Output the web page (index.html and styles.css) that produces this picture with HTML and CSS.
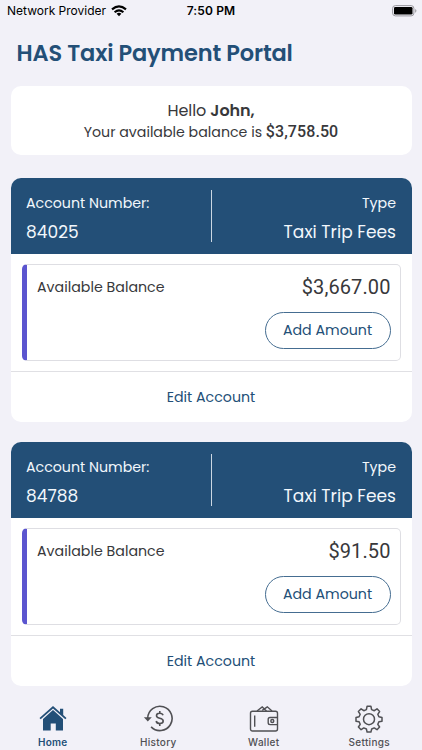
FILE: index.html
```html
<!DOCTYPE html>
<html lang="en">
<head>
<meta charset="utf-8">
<title>HAS Taxi Payment Portal</title>
<link rel="stylesheet" href="styles.css">
</head>
<body>
<div class="status">
  <div class="carrier"><span>Network Provider</span>
    <svg width="16" height="12" viewBox="0 0 16 12" fill="none" stroke="#000" stroke-width="2.1"><path d="M1 4.4Q8-1.8 15 4.4M3.6 7.2Q8 3.4 12.4 7.2"/><path d="M5.6 8.7Q8 6.8 10.4 8.7L8 11.2Z" fill="#000" stroke="none"/></svg>
  </div>
  <div class="clock">7:50 PM</div>
  <svg class="battery" width="25" height="12" viewBox="0 0 25 12"><rect x=".6" y=".6" width="21.3" height="10.3" rx="2.8" fill="none" stroke="#99989e"/><rect x="2" y="2" width="18.5" height="7.5" rx="1.3"/><path d="M23.2 4v3.7q1.2-.5 1.2-1.85T23.2 4" fill="#99989e"/></svg>
</div>
<h1>HAS Taxi Payment Portal</h1>
<main>
  <section class="card greeting">
    <p class="hello">Hello <b>John,</b></p>
    <p class="total"><span>Your available balance is</span> <b>$3,758.50</b></p>
  </section>
  <section class="card account">
    <header>
      <div class="col"><span class="label">Account Number:</span><span class="value number">84025</span></div>
      <div class="col right"><span class="label type">Type</span><span class="value">Taxi Trip Fees</span></div>
    </header>
    <div class="body"><div class="balance">
      <span class="caption">Available Balance</span>
      <div class="funds"><span class="amount">$3,667.00</span><a class="add">Add Amount</a></div>
    </div></div>
    <footer><a>Edit Account</a></footer>
  </section>
  <section class="card account">
    <header>
      <div class="col"><span class="label">Account Number:</span><span class="value number">84788</span></div>
      <div class="col right"><span class="label type">Type</span><span class="value">Taxi Trip Fees</span></div>
    </header>
    <div class="body"><div class="balance">
      <span class="caption">Available Balance</span>
      <div class="funds"><span class="amount">$91.50</span><a class="add">Add Amount</a></div>
    </div></div>
    <footer><a>Edit Account</a></footer>
  </section>
</main>
<nav>
  <a class="tab active">
    <svg width="30" height="28" viewBox="0 0 30 28" fill="#234f77"><path d="M15 1 22 7.2V3.7h3.2V10L28.5 13l-1.2 1.3L15 3.5 2.7 14.3 1.5 13Z"/><path d="M15 5.1 25 14V25.5H17.8V18.5H12.7V25.5H5V14Z"/></svg>
    <span>Home</span></a>
  <a class="tab">
    <svg width="30" height="28" viewBox="0 0 30 28" fill="none" stroke="#505054" stroke-width="1.6"><path d="M4.7 13.2A12.2 12.2 0 1 1 8.1 21.9"/><path d="M.9 12.3H8.8L4.8 16.4Z" fill="#505054" stroke="none"/><path d="M20 10.3Q19.5 8.3 16.6 8.3 13.5 8.3 13.5 10.7C13.5 14.2 20.2 12.3 20.2 16Q20.2 18.5 16.8 18.5 13.6 18.5 13.2 16M16.8 6V8.3M16.8 18.5V21"/></svg>
    <span>History</span></a>
  <a class="tab">
    <svg width="30" height="28" viewBox="0 0 30 28" fill="none" stroke="#505054" stroke-width="1.4"><rect x="1.5" y="6.2" width="27" height="19.8" rx="2"/><path d="M5.7 10.5V21.7M28.5 12.5H21Q19.2 12.5 19.2 14.3V17.8Q19.2 19.6 21 19.6H28.5M8 6 13.2 2 17.5 6M13.3 5.5 15 3.8M15.4 3.8 18.3 1.8 23 6"/><circle cx="23.3" cy="16" r="1.5"/></svg>
    <span>Wallet</span></a>
  <a class="tab">
    <svg width="30" height="28" viewBox="0 0 30 28" fill="none" stroke="#505054" stroke-width="1.5" stroke-linejoin="round"><path d="M13.1 1.2H16.9L17.6 4.6 20.3 5.7 23 3.8 25.6 6.5 23.8 9.3 24.9 11.7 28 12.4V16.2L24.9 16.8 23.8 19.3 25.6 22 23 24.7 20.2 22.9 17.7 24 16.9 27.1H13.1L12.4 24 9.8 22.9 7.1 24.7 4.4 22 6.2 19.3 5.1 16.8 2 16.2V12.4L5.1 11.7 6.2 9.3 4.4 6.5 7.1 3.8 9.8 5.7 12.4 4.6Z"/><circle cx="15" cy="14.2" r="5.5"/></svg>
    <span>Settings</span></a>
</nav>
</body>
</html>
```
FILE: styles.css
```css
* { box-sizing: border-box; }
body {
  margin: 0; width: 422px; height: 750px; overflow: hidden;
  display: flex; flex-direction: column;
  background: #f2f1f8; color: #38383b;
  font-family: Poppins, Inter, sans-serif;
  font-weight: 400; white-space: nowrap;
}
p, h1 { margin: 0; }
.status {
  display: grid; grid-template-columns: 1fr 60px 1fr; align-items: center;
  height: 22px; padding: 0 7px; color: #000;
  font: 400 12px/22px Inter, sans-serif;
}
.carrier { display: flex; align-items: center; gap: 5px; letter-spacing: 0; }
.clock { text-align: center; font-weight: 600; letter-spacing: .15px; }
.battery { justify-self: end; margin-right: -2px; }
h1 {
  height: 64px; padding: 15px 0 0 16.5px; color: #234f77;
  font-size: 22.5px; line-height: 32px; font-weight: 600; letter-spacing: -.15px;
}
main { padding: 0 10.5px; }
.card { background: #fff; border-radius: 10px; }
.greeting { height: 69px; padding-top: 14px; text-align: center; margin-bottom: 23px; }
.hello { font-size: 16px; line-height: 22px; letter-spacing: -.1px; }
.hello b { font-weight: 600; }
.total { font-size: 14.2px; line-height: 20px; }
.total b { font: 500 16px/20px Roboto, sans-serif; letter-spacing: .08px; }
.account { height: 243.5px; margin-bottom: 20.8px; overflow: hidden; }
.account header { height: 76px; background: #234f77; color: #f2f7fc; display: grid; grid-template-columns: 1fr 1fr; padding: 12px 15.5px; }
.col { display: flex; flex-direction: column; height: 52px; }
.right { align-items: flex-end; border-left: 1px solid #cbd7e2; }
.label { font-size: 14.2px; line-height: 26px; }
.value { font-size: 17px; line-height: 32px; letter-spacing: .04px; }
.body { height: 118px; padding: 10px 10.5px 11px 11px; border-bottom: 1px solid #e0e0e4; }
.balance {
  height: 97px; border: 1px solid #dedee3; border-left: 5px solid #5b55cf; border-radius: 5px;
  display: flex; justify-content: space-between; padding: 9.5px 9.5px 0 10.5px;
}
.caption { font-size: 14.2px; line-height: 25px; letter-spacing: .02px; }
.funds { display: flex; flex-direction: column; align-items: flex-end; }
.amount { font: 400 20px/25px Roboto, sans-serif; letter-spacing: .1px; }
.add { margin-top: 12.5px; width: 126px; height: 37px; border: 1px solid #456d91; border-radius: 19px; text-align: center; font-size: 14.2px; line-height: 35px; color: #234f77; }
footer { text-align: center; font-size: 14.2px; line-height: 51px; color: #234f77; }
nav { display: grid; grid-template-columns: repeat(4, 1fr); margin-top: -2px; }
.tab { display: flex; flex-direction: column; align-items: center; gap: 2px; color: #505054; font: 500 10px/14px Inter, sans-serif; letter-spacing: .3px; }
.active { color: #234f77; font-weight: 600; }
```
